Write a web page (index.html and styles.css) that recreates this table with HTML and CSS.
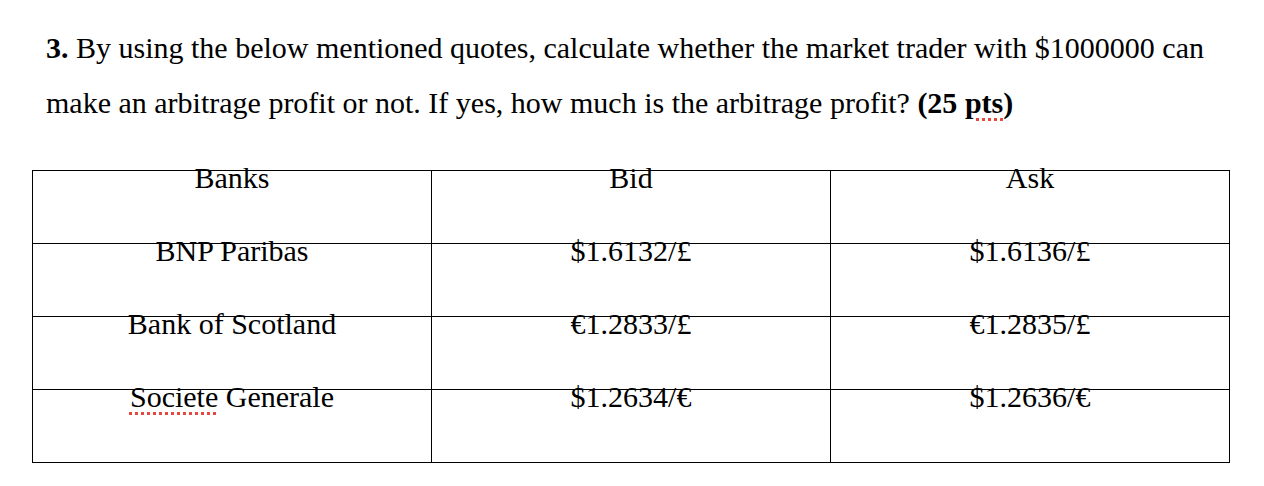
FILE: index.html
```html
<!DOCTYPE html>
<html>
<head>
<meta charset="utf-8">
<link rel="stylesheet" href="styles.css">
</head>
<body>
<div class="page">
  <p class="question"><b>3.</b> By using the below mentioned quotes, calculate whether the market trader with $1000000 can<br>make an arbitrage profit or not. If yes, how much is the arbitrage profit? <b>(25 <span class="spell">pts</span>)</b></p>
  <table class="quotes">
    <tr><td>Banks</td><td>Bid</td><td>Ask</td></tr>
    <tr><td>BNP Paribas</td><td>$1.6132/£</td><td>$1.6136/£</td></tr>
    <tr><td>Bank of Scotland</td><td>€1.2833/£</td><td>€1.2835/£</td></tr>
    <tr><td><span class="spell">Societe</span> Generale</td><td>$1.2634/€</td><td>$1.2636/€</td></tr>
  </table>
</div>
</body>
</html>
```

FILE: styles.css
```css
html, body {
  margin: 0;
  padding: 0;
  background: #fff;
}
body {
  font-family: "Liberation Serif", "Times New Roman", serif;
  color: #000;
}
.page {
  padding: 20px 0 0 32px;
}
.question {
  margin: 0 0 40px 14px;
  font-size: 30px;
  line-height: 55px;
}
.spell {
  text-decoration: underline dotted #e5483d;
  text-decoration-thickness: 3px;
  text-underline-offset: 5px;
}
.quotes {
  border-collapse: collapse;
  table-layout: fixed;
  width: 1198px;
}
.quotes td {
  height: 72px;
  border: 1px solid #000;
  padding: 0;
  vertical-align: top;
  text-align: center;
  font-size: 30px;
  line-height: 14px;
}
```
